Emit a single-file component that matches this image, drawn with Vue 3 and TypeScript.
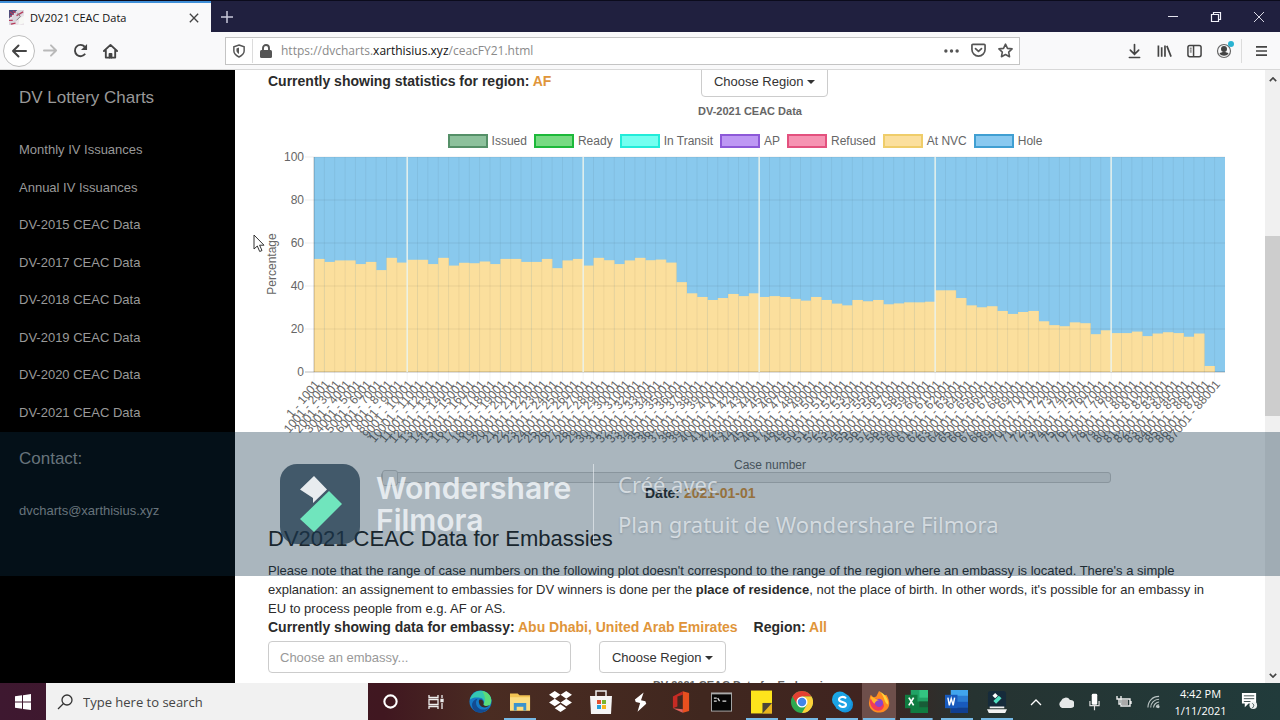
<script setup lang="ts">
import { ref } from 'vue'

const links: string[] = [
  'Monthly IV Issuances',
  'Annual IV Issuances',
  'DV-2015 CEAC Data',
  'DV-2017 CEAC Data',
  'DV-2018 CEAC Data',
  'DV-2019 CEAC Data',
  'DV-2020 CEAC Data',
  'DV-2021 CEAC Data',
]

interface Series { label: string; key: string }
const legend: Series[] = [
  { label: 'Issued', key: 'issued' },
  { label: 'Ready', key: 'ready' },
  { label: 'In Transit', key: 'transit' },
  { label: 'AP', key: 'ap' },
  { label: 'Refused', key: 'refused' },
  { label: 'At NVC', key: 'nvc' },
  { label: 'Hole', key: 'hole' },
]

const atNvc: number[] = [
  52.6, 51.2, 51.9, 51.9, 50.2, 51.2, 47.4, 53.1, 50.9, 52.2, 52.2, 50.2, 53.1, 49.5, 50.8, 50.6, 51.4,
  50.2, 52.6, 52.6, 51.2, 51.2, 52.6, 48.3, 51.9, 52.6, 49.5, 53.1, 52, 50.2, 51.9, 53.1, 52, 52.3,
  50.9, 41.8, 36.6, 34.9, 33.5, 34.4, 36.3, 35.3, 36.6, 34.9, 35.3, 34.9, 34, 33.2, 34.9, 33.5, 31.8,
  31, 33.5, 32.9, 33.5, 31.5, 31.9, 32.4, 32.4, 32.7, 38, 38, 34.4, 31, 30.1, 30.6, 28.4, 27, 27.9,
  28.4, 23.6, 21.8, 21.3, 23.1, 22.7, 17.6, 19.4, 18.1, 18.1, 18.8, 16.7, 17.9, 18.5, 18.1, 16.4,
  17.9, 2.8, 0,
]
const plot = { x: 46, y: 7, w: 911, h: 215 }
const step = plot.w / atNvc.length
const bars = atNvc.map((v, i) => ({
  x: plot.x + i * step,
  top: plot.y + plot.h * (1 - v / 100),
  h: (plot.h * v) / 100,
  label: `${i * 1000 + 1} - ${(i + 1) * 1000 + 1}`,
}))
const separators = [9, 26, 43, 60, 77].map((n) => plot.x + n * step)
const yTicks = [0, 20, 40, 60, 80, 100].map((v) => ({ v, y: plot.y + plot.h * (1 - v / 100) }))

const day = ref(0)
const embassy = ref('')
</script>

<template>
  <div class="screen">
    <header class="tabs">
      <div class="tab">
        <svg class="favicon" viewBox="0 0 16 16"><rect width="16" height="16" fill="#e9e3e8" /><path d="M0 0h9L0 9z" fill="#4c4d7c" /><path d="M9 0h7v3L4 16H0v-3z" fill="#d8d5dd" /><path d="M1 2l4 3M4 1l3 2M1 6l2 1M0 11h4M2 15l5-1M8 6l7-4" stroke="#b83b5b" stroke-width="1.3" /><path d="M16 6v8l-6 2 1-7z" fill="#f7f8f5" /><path d="M9 3l3 4-4 4" stroke="#777" fill="none" /></svg>
        <span>DV2021 CEAC Data</span>
        <button class="icon close" aria-label="Close tab"><svg viewBox="0 0 12 12" width="10" height="10"><path d="M1 1l10 10M11 1L1 11" stroke="#444" stroke-width="1.6" /></svg></button>
      </div>
      <button class="icon newtab" aria-label="New tab"><svg viewBox="0 0 14 14" width="14" height="14"><path d="M7 1v12M1 7h12" stroke="#c8c8da" stroke-width="1.5" /></svg></button>
      <div class="winbtns">
        <button class="icon" aria-label="Minimize"><svg viewBox="0 0 12 12" width="12" height="12"><path d="M1 5.500h10" stroke="#e4e4ee" /></svg></button>
        <button class="icon" aria-label="Restore"><svg viewBox="0 0 12 12" width="12" height="12" fill="none" stroke="#f2f2fa" stroke-width="1.2"><path d="M1.500 3.500h7v7h-7zM3.500 3.500v-2h7v7h-2" /></svg></button>
        <button class="icon" aria-label="Close"><svg viewBox="0 0 12 12" width="12" height="12"><path d="M1 1l10 10M11 1L1 11" stroke="#d8d8e4" /></svg></button>
      </div>
    </header>

    <nav class="toolbar">
      <div class="navbtns">
        <button class="icon back" aria-label="Back"><svg viewBox="0 0 16 16" width="16" height="16" fill="none" stroke="#444" stroke-width="2" stroke-linecap="round" stroke-linejoin="round"><path d="M15 8H2M7.500 2.500L2 8l5.500 5.500" /></svg></button>
        <button class="icon" aria-label="Forward"><svg viewBox="0 0 16 16" width="15" height="15" fill="none" stroke="#b9b9b9" stroke-width="2" stroke-linecap="round" stroke-linejoin="round"><path d="M1 8h13M8.500 2.500L14 8l-5.500 5.500" /></svg></button>
        <button class="icon" aria-label="Reload"><svg viewBox="0 0 16 16" width="15" height="15" fill="none" stroke="#444" stroke-width="2"><path d="M13 11.500A6 6 0 1 1 12.500 4" /><path d="M15 1v6.500H8.500z" fill="#444" stroke="none" /></svg></button>
        <button class="icon" aria-label="Home"><svg viewBox="0 0 16 16" width="15" height="16" fill="none" stroke="#444" stroke-width="2" stroke-linejoin="round" stroke-linecap="round"><path d="M1 8l7-6.500L15 8M3 7.500V15h10V7.500" /><path d="M7 15v-4h2v4" /></svg></button>
      </div>
      <div class="url">
        <svg viewBox="0 0 14 16" width="12" height="14" fill="none" stroke="#555" stroke-width="1.700"><path d="M7 1l6 2v5c0 3.500-3 5.500-6 7-3-1.500-6-3.500-6-7V3z" /><path d="M7 4v7.500C5 10.500 4 9 4 7.500V5z" fill="#555" stroke="none" /></svg>
        <i class="bar"></i>
        <svg viewBox="0 0 12 14" width="12" height="14"><rect y="6" width="12" height="8" rx="1.500" fill="#555" /><path d="M3 7V4a3 3 0 0 1 6 0v3" fill="none" stroke="#555" stroke-width="1.900" /></svg>
        <span class="address">https://dvcharts.<b>xarthisius.xyz</b>/ceacFY21.html</span>
        <svg viewBox="0 0 16 4" width="15" height="4" fill="#555"><circle cx="2" cy="2" r="1.800" /><circle cx="8" cy="2" r="1.800" /><circle cx="14" cy="2" r="1.800" /></svg>
        <svg viewBox="0 0 16 16" width="15" height="15" fill="none" stroke="#555" stroke-width="1.800" stroke-linecap="round" stroke-linejoin="round"><path d="M2 1.500h12a1 1 0 0 1 1 1V7a7 7 0 0 1-14 0V2.500a1 1 0 0 1 1-1z" /><path d="M4.800 6l3.200 3 3.200-3" /></svg>
        <svg viewBox="0 0 16 16" width="15" height="15" fill="none" stroke="#555" stroke-width="1.700" stroke-linejoin="round"><path d="M8 1.200l2.100 4.500 4.900.6-3.600 3.400.9 4.900L8 12.200l-4.300 2.400.9-4.900L1 6.300l4.900-.6z" /></svg>
      </div>
      <div class="tools">
        <button class="icon" aria-label="Downloads"><svg viewBox="0 0 14 16" width="13" height="16" fill="none" stroke="#444" stroke-width="1.800" stroke-linecap="round"><path d="M7 1v10M2.500 7L7 11.500 11.500 7M1.500 15h11" /></svg></button>
        <button class="icon" aria-label="Library"><svg viewBox="0 0 16 14" width="15" height="14" stroke="#444" stroke-width="1.800"><path d="M1.500 1v12M5 3v10M8.500 1v12M10.500 1.500L15 13" /></svg></button>
        <button class="icon" aria-label="Sidebars"><svg viewBox="0 0 16 14" width="15" height="14" fill="none" stroke="#444" stroke-width="1.600"><rect x="1" y="1" width="14" height="12" rx="2" /><path d="M7 1v12" /><path d="M3 4h2M3 6h2M3 8h2" stroke-width="1" /></svg></button>
        <button class="icon" aria-label="Account"><svg viewBox="0 0 20 20" width="20" height="20"><circle cx="10" cy="10" r="6.500" fill="none" stroke="#666" stroke-width="1.200" /><circle cx="10" cy="8" r="3" fill="#444" /><path d="M5.500 12.500c2-2 7-2 9 0-2 3-7 3-9 0z" fill="#444" /><circle cx="17" cy="3" r="3" fill="#29b3d2" /></svg></button>
        <i class="bar"></i>
        <button class="icon" aria-label="Menu"><svg viewBox="0 0 12 12" width="11" height="12"><path d="M0 1.500h12M0 6h12M0 10.500h12" stroke="#444" stroke-width="1.700" /></svg></button>
      </div>
    </nav>

    <div class="page">
      <aside class="side">
        <a class="brand" href="#">DV Lottery Charts</a>
        <ul>
          <li v-for="l in links" :key="l"><a href="#">{{ l }}</a></li>
        </ul>
        <div class="brand contact">Contact:</div>
        <a class="mail" href="#">dvcharts@xarthisius.xyz</a>
      </aside>

      <main class="content">
        <div class="row top">
          <strong class="lead">Currently showing statistics for region: <em>AF</em></strong>
          <button class="btn">Choose Region <i class="caret"></i></button>
        </div>
        <div class="chart-title">DV-2021 CEAC Data</div>
        <div class="legend">
          <span v-for="s in legend" :key="s.key" class="key"><i :class="['swatch', s.key]"></i>{{ s.label }}</span>
        </div>
        <svg class="chart" viewBox="0 0 964 324">
          <rect :x="plot.x" :y="plot.y" :width="plot.w" :height="plot.h" fill="#89c9ed" />
          <rect v-for="b in bars" :key="b.label" :x="b.x" :y="b.top" :width="step + 0.3" :height="b.h" fill="#fbdf9d" />
          <g stroke="#000" stroke-opacity=".05">
            <path v-for="b in bars" :key="b.label" :d="`M${b.x} ${plot.y}V${plot.y + plot.h + 9}`" />
          </g>
          <g stroke="#000" stroke-opacity=".07">
            <path v-for="t in yTicks" :key="t.v" :d="`M37 ${t.y}H${plot.x + plot.w}`" />
          </g>
          <path d="M37 222H957M46 7V222" stroke="#000" stroke-opacity=".2" />
          <path v-for="x in separators" :key="x" :d="`M${x} ${plot.y}V${plot.y + plot.h}`" stroke="#eef6ee" stroke-width="1.400" />
          <text v-for="t in yTicks" :key="t.v" x="36" :y="t.y + 4" text-anchor="end">{{ t.v }}</text>
          <text v-for="b in bars" :key="b.label" text-anchor="end" :transform="`translate(${b.x + 3} ${plot.y + plot.h + 10}) rotate(-50)`" y="4">{{ b.label }}</text>
          <text transform="translate(8 114) rotate(-90)" text-anchor="middle">Percentage</text>
          <text x="502" y="319" text-anchor="middle">Case number</text>
        </svg>
        <input v-model="day" class="slider" type="range" min="0" max="100" aria-label="Date" />
        <div class="date"><strong class="lead">Date: <em>2021-01-01</em></strong></div>
        <h2>DV2021 CEAC Data for Embassies</h2>
        <p>Please note that the range of case numbers on the following plot doesn't correspond to the range of the region where an embassy is located. There's a simple explanation: an assignement to embassies for DV winners is done per the <b>place of residence</b>, not the place of birth. In other words, it's possible for an embassy in EU to process people from e.g. AF or AS.</p>
        <div class="row info">
          <strong class="lead">Currently showing data for embassy: <em>Abu Dhabi, United Arab Emirates</em></strong>
          <strong class="lead">Region: <em>All</em></strong>
        </div>
        <div class="row form">
          <input v-model="embassy" class="field" type="text" placeholder="Choose an embassy..." aria-label="Embassy" />
          <button class="btn">Choose Region <i class="caret"></i></button>
        </div>
        <div class="chart-title second">DV-2021 CEAC Data for Embassies</div>
      </main>

      <div class="scroll">
        <svg viewBox="0 0 10 6" width="8" height="5"><path d="M1 5l4-4 4 4" fill="none" stroke="#444" stroke-width="2" /></svg>
        <i class="thumb"></i>
        <svg viewBox="0 0 10 6" width="8" height="5"><path d="M1 1l4 4 4-4" fill="none" stroke="#444" stroke-width="2" /></svg>
      </div>
    </div>

    <div class="watermark">
      <svg class="logo" viewBox="0 0 80 80"><rect width="80" height="80" rx="17" fill="#1b3549" fill-opacity=".72" /><path d="M34 12l13 13.500L33 39v-5L20 25.500z" fill="#e8ecef" /><path d="M49 27l13 13-28 28-14-13z" fill="#70e5bd" /></svg>
      <div class="brandname">Wondershare<br />Filmora</div>
      <div class="plan">Créé avec<br />Plan gratuit de Wondershare Filmora</div>
    </div>

    <svg class="cursor" viewBox="0 0 12 19" width="12" height="19"><path d="M1 1v14l3.300-3 2.400 5.500 2.300-1-2.400-5.300H11z" fill="#fff" stroke="#333" /></svg>

    <footer class="taskbar">
      <button class="icon start" aria-label="Start"><svg viewBox="0 0 16 16" width="16" height="18" fill="#fff"><path d="M0 2.300l7-1v6.300H0zM8 1.200L16 0v7.600H8zM0 8.500h7v6.300l-7-1zM8 8.500h8V16l-8-1.100z" /></svg></button>
      <label class="search">
        <svg viewBox="0 0 16 16" width="16" height="16" fill="none" stroke="#333" stroke-width="1.300"><circle cx="10" cy="6" r="5" /><path d="M6.500 9.500L1 15" /></svg>
        <input type="text" placeholder="Type here to search" aria-label="Search" />
      </label>
      <button class="icon wide" aria-label="Cortana"><svg viewBox="0 0 18 18" width="17" height="17"><circle cx="9" cy="9" r="6.500" fill="none" stroke="#fff" stroke-width="2.200" /></svg></button>
      <button class="icon wide" aria-label="Task view"><svg viewBox="0 0 16 16" width="16" height="16" fill="none" stroke="#eee" stroke-width="1.300"><path d="M1 1v2.500h9V1M1 15v-2.500h9V15M1 5.500h9v5H1zM14 1v3M14 9v6" /><path d="M13 5.500h2v2h-2z" fill="#eee" /></svg></button>
      <div class="apps">
        <button class="icon" aria-label="Edge"><svg viewBox="0 0 24 24" width="23" height="23"><circle cx="12" cy="12" r="11.500" fill="#157ac6" /><path d="M1 10C3 2 11-1 17 2c6 3 8 9 5 13-2 2-6 2-7 0 2-3 0-7-4-7-4-.500-8 0-10 2z" fill="#35c8b1" /><path d="M14 1c8 1 11 9 8 14-2 2-6 2-7 0 3-3 2-8-1-14z" fill="#5bdc79" /><path d="M9 9c-3 3-2 9 3 11 4 1 7 0 9-2-3 6-10 7-15 4C1 17 3 10 9 9z" fill="#134b91" /><path d="M11 10c3-1 5 2 4 5 1 2 4 2 6 1-2 3-8 3-10-1-1-2-1-4 0-5z" fill="#3b2a26" /></svg></button>
        <button class="icon run" aria-label="File Explorer"><svg viewBox="0 0 22 20" width="21" height="20"><path d="M0 1h8l2 2h11v16H0z" fill="#f2c453" /><path d="M0 5h21v14H0z" fill="#fbdd81" /><path d="M4 19v-8h13v8h-3v-4H7v4z" fill="#3b93cd" /></svg></button>
        <button class="icon" aria-label="Dropbox"><svg viewBox="0 0 24 22" width="23" height="21" fill="#fff"><path d="M6 0l6 4-6 4-6-4zM18 0l6 4-6 4-6-4zM6 8l6 4-6 4-6-4zM18 8l6 4-6 4-6-4zM12 14l6 4-6 4-6-4z" /></svg></button>
        <button class="icon" aria-label="Store"><svg viewBox="0 0 22 26" width="22" height="26"><path d="M6 7V2h10v5" fill="none" stroke="#eee" stroke-width="1.500" /><path d="M0 7h22l-1 18H1z" fill="#f5f5f5" /><path d="M7 11h4v4H7z" fill="#e5502d" /><path d="M12 11h4v4h-4z" fill="#79b52c" /><path d="M7 16h4v4H7z" fill="#26a0da" /><path d="M12 16h4v4h-4z" fill="#f4b71b" /></svg></button>
        <button class="icon" aria-label="Streamlabs"><svg viewBox="0 0 16 22" width="14" height="20" fill="#fff"><path d="M11 0L1 8l1 3 5 1-3 10 10-9-1-3-5-1z" /></svg></button>
        <button class="icon" aria-label="Office"><svg viewBox="0 0 20 24" width="18" height="22"><path d="M12 0l7 2v20l-7 2z" fill="#e8501f" /><path d="M12 0v4L6 6v11l-5 2V6z" fill="#c62b24" /><path d="M1 19l11 1v4z" fill="#e15f5a" /></svg></button>
        <button class="icon" aria-label="Command Prompt"><svg viewBox="0 0 22 20" width="21" height="20"><rect width="22" height="20" fill="#aaa" /><rect x="1" y="2" width="20" height="17" fill="#050505" /><path d="M3 6h3M3 9h3M7 6l2 3M12 9h4" stroke="#ddd" stroke-width="1.400" /></svg></button>
        <button class="icon run" aria-label="Sticky Notes"><svg viewBox="0 0 22 24" width="21" height="24"><path d="M0 0h22v24H0z" fill="#fde41c" /><path d="M12 24V13h10v11z" fill="#4b4638" /><path d="M12 24l10-11v11z" fill="#e8b520" /></svg></button>
        <button class="icon run" aria-label="Chrome"><svg viewBox="0 0 24 24" width="22" height="22"><circle cx="12" cy="12" r="12" fill="#2da94f" /><path d="M1.600 6A12 12 0 0 1 22.400 6H12L7 15z" fill="#e34133" /><path d="M22.400 6A12 12 0 0 1 12 24l5.200-9L12 6z" fill="#fdd13a" /><circle cx="12" cy="12" r="6" fill="#fff" /><circle cx="12" cy="12" r="4.600" fill="#4285e8" /></svg></button>
        <button class="icon run" aria-label="Skype"><svg viewBox="0 0 24 24" width="21" height="22"><circle cx="9" cy="9" r="9" fill="#1ba8e6" /><circle cx="15" cy="15" r="9" fill="#1594dc" /><circle cx="12" cy="12" r="10" fill="#1ba3e4" /><path d="M16 8c-2-3-8-2-8 1 0 4 8 2 8 6 0 3-6 4-8 0" fill="none" stroke="#fff" stroke-width="2.400" /></svg></button>
        <button class="icon run active" aria-label="Firefox"><svg viewBox="0 0 24 24" width="22" height="24"><path d="M2 7l1-3 3 3 3-1 3-6c2 2 4 3 5 5l3-1c5 8 4 15-2 18-7 4-17 0-17-9z" fill="#ff8a20" /><path d="M12 0c6 3 11 9 10 15-5-2-3-9-10-15z" fill="#ffd33c" /><path d="M2 10c2-3 7-3 9 0 8 2 8 8 3 11-6 2-12-3-12-11z" fill="#f13b59" /><circle cx="12" cy="13" r="4.500" fill="#8b45cb" /><path d="M3 6c4 1 5 3 9 4-3 0-4 2-5 4-2-2-4-4-4-8z" fill="#ffb52a" /></svg></button>
        <button class="icon run" aria-label="Excel"><svg viewBox="0 0 24 24" width="23" height="23"><path d="M6 0h18v24H6z" fill="#21a366" /><path d="M15 0h9v8h-9z" fill="#33c481" /><path d="M6 12h18v12H6z" fill="#107c41" /><path d="M15 12h9v6h-9z" fill="#185c37" /><rect y="5" width="13" height="14" fill="#107c41" /><path d="M4 8l5 8M9 8l-5 8" stroke="#fff" stroke-width="1.800" /></svg></button>
        <button class="icon run" aria-label="Word"><svg viewBox="0 0 24 24" width="23" height="23"><path d="M6 0h18v24H6z" fill="#41a5ee" /><path d="M6 6h18v6H6z" fill="#2b7cd3" /><path d="M6 12h18v6H6z" fill="#185abd" /><path d="M6 18h18v6H6z" fill="#103f91" /><rect y="5" width="13" height="14" fill="#185abd" /><path d="M3 8l1.500 8 2-7 2 7L10 8" stroke="#fff" stroke-width="1.500" fill="none" /></svg></button>
        <button class="icon run" aria-label="Filmora"><svg viewBox="0 0 22 24" width="20" height="24"><rect x="1" width="20" height="18" rx="3" fill="#162b3b" /><path d="M9 2l3 3-3 3-3-3z" fill="#fff" /><path d="M13 5l3 3-6 6-3-3z" fill="#52dfc0" /><path d="M3 17h16v2H3zM0 20h22l-2 4H2z" fill="#f2f2f2" /></svg></button>
      </div>
      <div class="tray">
        <svg viewBox="0 0 12 8" width="12" height="8"><path d="M1 7l5-5 5 5" fill="none" stroke="#fff" stroke-width="1.300" /></svg>
        <svg viewBox="0 0 16 12" width="16" height="12"><path d="M4 12a4 4 0 0 1-1-7 5 5 0 0 1 9-1 4 4 0 0 1 1 8z" fill="#e5e8e8" /></svg>
        <svg viewBox="0 0 12 18" width="11" height="18"><rect x="3" width="6" height="12" rx="1.500" fill="#fff" /><path d="M1 8v5h10V8M6 13v5" fill="none" stroke="#ddd" stroke-width="1.300" /></svg>
        <svg viewBox="0 0 16 14" width="16" height="14" fill="none" stroke="#eee" stroke-width="1.400"><path d="M5 4h9v7H5zM15 6v3M1 1v3h4V1M3 4v5h2" /><path d="M6 5h6v5H6z" fill="#aaa" stroke="none" /></svg>
        <svg viewBox="0 0 14 14" width="13" height="14" fill="none" stroke="#bbc5c5" stroke-width="1.200"><path d="M1 13C1 6 6 1 13 1M4 13c0-5 4-9 9-9M7 13c0-3 3-6 6-6M10 13c0-2 1-3 3-3" /><circle cx="12" cy="12" r="1" fill="#fff" /></svg>
        <div class="clock"><span>4:42 PM</span><span>1/11/2021</span></div>
        <svg viewBox="0 0 18 20" width="17" height="19"><path d="M1 1h15v11H8l-4 4v-4H1z" fill="#fff" /><path d="M3 4h11M3 7h11M3 10h7" stroke="#3a4c4c" /><circle cx="13" cy="14" r="4" fill="#eef2f2" /><path d="M12 12c2 1 2 3 0 5" stroke="#3a4c4c" fill="none" /></svg>
      </div>
    </footer>
  </div>
</template>

<style>
html, body { margin: 0; overflow: hidden; }
</style>

<style scoped>
.screen { position: relative; display: flex; flex-direction: column; height: 100vh; overflow: hidden; background: #fff; font-family: "Liberation Sans", Arial, sans-serif; font-size: 13px; color: #2b2b2b; }
button, input { font: inherit; color: inherit; box-sizing: border-box; }
svg { display: block; flex: none; }
a { text-decoration: none; color: inherit; }
.icon { display: flex; align-items: center; justify-content: center; padding: 0; border: 0; background: none; }
.bar { width: 1px; height: 24px; background: #dcdcdc; }

.tabs { display: flex; flex: none; height: 32px; background: #20203f; border-top: 1px solid #0b0b1c; box-sizing: border-box; }
.tab { display: flex; align-items: center; box-sizing: border-box; width: 211px; padding: 0 10px 0 9px; border-top: 2px solid #3f8fd8; background: #f9f9fa; font: 11px "Open Sans", "Noto Sans", sans-serif; color: #111; }
.favicon { width: 15px; height: 15px; margin-right: 6px; }
.close { width: 14px; margin-left: auto; }
.newtab { width: 31px; }
.winbtns { display: flex; margin-left: auto; }
.winbtns .icon { width: 43px; }

.toolbar { display: flex; flex: none; align-items: center; height: 38px; box-sizing: border-box; background: #f9f9fa; border-bottom: 1px solid #d8d8d8; }
.navbtns { display: flex; align-items: center; width: 225px; flex: none; padding-left: 3px; box-sizing: border-box; }
.navbtns .icon { width: 30px; height: 32px; }
.navbtns .back { width: 32px; box-sizing: border-box; border: 1px solid #bdbdbd; border-radius: 50%; background: #fff; }
.url { display: flex; align-items: center; gap: 12px; flex: 1; height: 28px; box-sizing: border-box; padding: 0 6px 0 7px; border: 1px solid #c4c4c4; background: #fff; font: 12px "Open Sans", "Noto Sans", sans-serif; color: #8a8a8a; }
.url .bar { margin: 0 -5px 0 -5px; }
.address { flex: 1; margin-left: -3px; }
.address b { font-weight: 400; color: #111; }
.tools { display: flex; align-items: center; width: 260px; flex: none; padding-left: 99px; box-sizing: border-box; }
.tools .icon { width: 30px; height: 30px; }
.tools .bar { margin: 0 4px 0 2px; }

.page { display: flex; flex: 1; min-height: 0; }
.side { width: 235px; flex: none; box-sizing: border-box; padding: 16px 19px; background: #000; color: #999; overflow: hidden; }
.brand { display: block; font-size: 17px; line-height: 24px; }
.side ul { display: grid; height: 300px; margin: 21px 0 0; padding: 0; list-style: none; align-items: center; }
.contact { margin-top: 16px; }
.mail { display: block; margin-top: 30px; line-height: 20px; }

.content { flex: 1; min-width: 0; overflow: hidden; padding: 0 33px; box-sizing: border-box; }
.row { display: flex; align-items: center; }
.top { margin-top: -5px; justify-content: space-between; padding-right: 404px; }
.lead { font-size: 14px; font-weight: 700; }
.lead em { font-style: normal; color: #e0953a; }
.btn { width: 127px; height: 32px; padding: 0; border: 1px solid #ccc; border-radius: 4px; background: #fff; color: #333; white-space: nowrap; }
.caret { display: inline-block; vertical-align: middle; border: 4px solid transparent; border-top-color: #333; border-bottom: 0; }
.chart-title { margin-top: 7px; text-align: center; font-size: 11px; line-height: 14px; font-weight: 700; color: #666; }
.legend { display: flex; justify-content: center; gap: 7px; margin-top: 16px; padding-right: 10px; font-size: 12px; line-height: 14px; color: #666; }
.key { display: flex; gap: 4px; }
.swatch { width: 40px; height: 14px; box-sizing: border-box; border: 2px solid; }
.issued { border-color: #559068; background: #8dc19c; }
.ready { border-color: #1db93a; background: #77db82; }
.transit { border-color: #22ecd9; background: #74fff0; }
.ap { border-color: #8d59d8; background: #be98f4; }
.refused { border-color: #e3517e; background: #f693b2; }
.nvc { border-color: #efcd6a; background: #fbdf9d; }
.hole { border-color: #409fd2; background: #89c9f0; }
.chart { width: 100%; height: auto; margin-top: 2px; overflow: visible; font-size: 12px; fill: #666; }
.slider { display: block; appearance: none; width: 730px; height: 11px; margin: -2px auto 0 113px; border: 1px solid #ccc; border-radius: 3px; background: #eee; }
.slider::-webkit-slider-thumb { appearance: none; width: 16px; height: 16px; border: 1px solid #ccc; border-radius: 3px; background: #f2f2f2; }
.date { margin: 1px 0 0 377px; line-height: 18px; }
h2 { margin: 21px 0 0; font-size: 22px; line-height: 30px; font-weight: 400; color: #222; }
p { margin: 7px 0 0; padding-right: 8px; line-height: 19px; }
.info { gap: 16px; line-height: 19px; }
.form { gap: 28px; margin-top: 4px; }
.field { width: 303px; height: 32px; padding: 0 11px; border: 1px solid #ccc; border-radius: 4px; background: #fff; }
.field::placeholder { color: #999; opacity: 1; }
.second { margin-top: 5px; padding-right: 12px; }

.scroll { display: flex; flex-direction: column; align-items: center; width: 15px; flex: none; box-sizing: border-box; padding: 7px 0 5px; background: #f0f0f0; }
.thumb { width: 15px; flex: 0 0 30%; margin: 154px 0 auto; background: #cdcdcd; }

.watermark { position: absolute; left: 0; right: 0; top: 432px; height: 144px; display: flex; box-sizing: border-box; padding: 32px 0 32px 280px; background: rgba(12, 46, 68, .35); pointer-events: none; color: rgba(240, 244, 247, .85); }
.logo { width: 80px; height: 80px; }
.brandname { width: 218px; height: 80px; box-sizing: border-box; margin-left: 16px; padding-top: 8px; border-right: 1px solid rgba(240, 244, 247, .6); font: 600 30px/32px Inter, "Open Sans", sans-serif; }
.plan { padding-left: 24px; font: 22px/40px "Noto Sans", sans-serif; color: rgba(240, 244, 247, .7); white-space: nowrap; text-shadow: 0 1px 2px rgba(40, 60, 75, .25); }
.cursor { position: absolute; left: 253px; top: 234px; }

.taskbar { display: flex; flex: none; height: 37px; background: linear-gradient(90deg, #3e1830 0, #401720 30%, #4a2c22 38%, #40271f 55%, #402420 68%, #263331 76%, #213b3b 100%); color: #fff; font-family: "Open Sans", "Noto Sans", sans-serif; }
.start { width: 46px; flex: none; }
.search { display: flex; align-items: center; gap: 10px; width: 322px; flex: none; box-sizing: border-box; padding-left: 11px; background: #f1f1f1; }
.search input { flex: 1; min-width: 0; border: 0; padding: 0; background: none; color: #333; }
.search input::placeholder { color: #444; opacity: 1; }
.wide { width: 45px; flex: none; }
.apps { display: flex; width: 559px; flex: none; padding-left: 2px; box-sizing: border-box; }
.apps .icon { flex: 1; min-width: 0; border: solid transparent; border-width: 0 4px; background-clip: padding-box; }
.apps .run { background: linear-gradient(#76b9e5, #76b9e5) bottom / 100% 2px no-repeat padding-box; }
.apps .active { border-width: 0 1px; background: linear-gradient(#76b9e5, #76b9e5) bottom / 100% 2px no-repeat, #6e4f4b; }
.tray { display: flex; align-items: center; justify-content: space-between; flex: 1; padding: 0 22px 0 13px; }
.clock { display: flex; flex-direction: column; width: 50px; align-items: center; font-size: 11px; line-height: 17px; }
</style>
